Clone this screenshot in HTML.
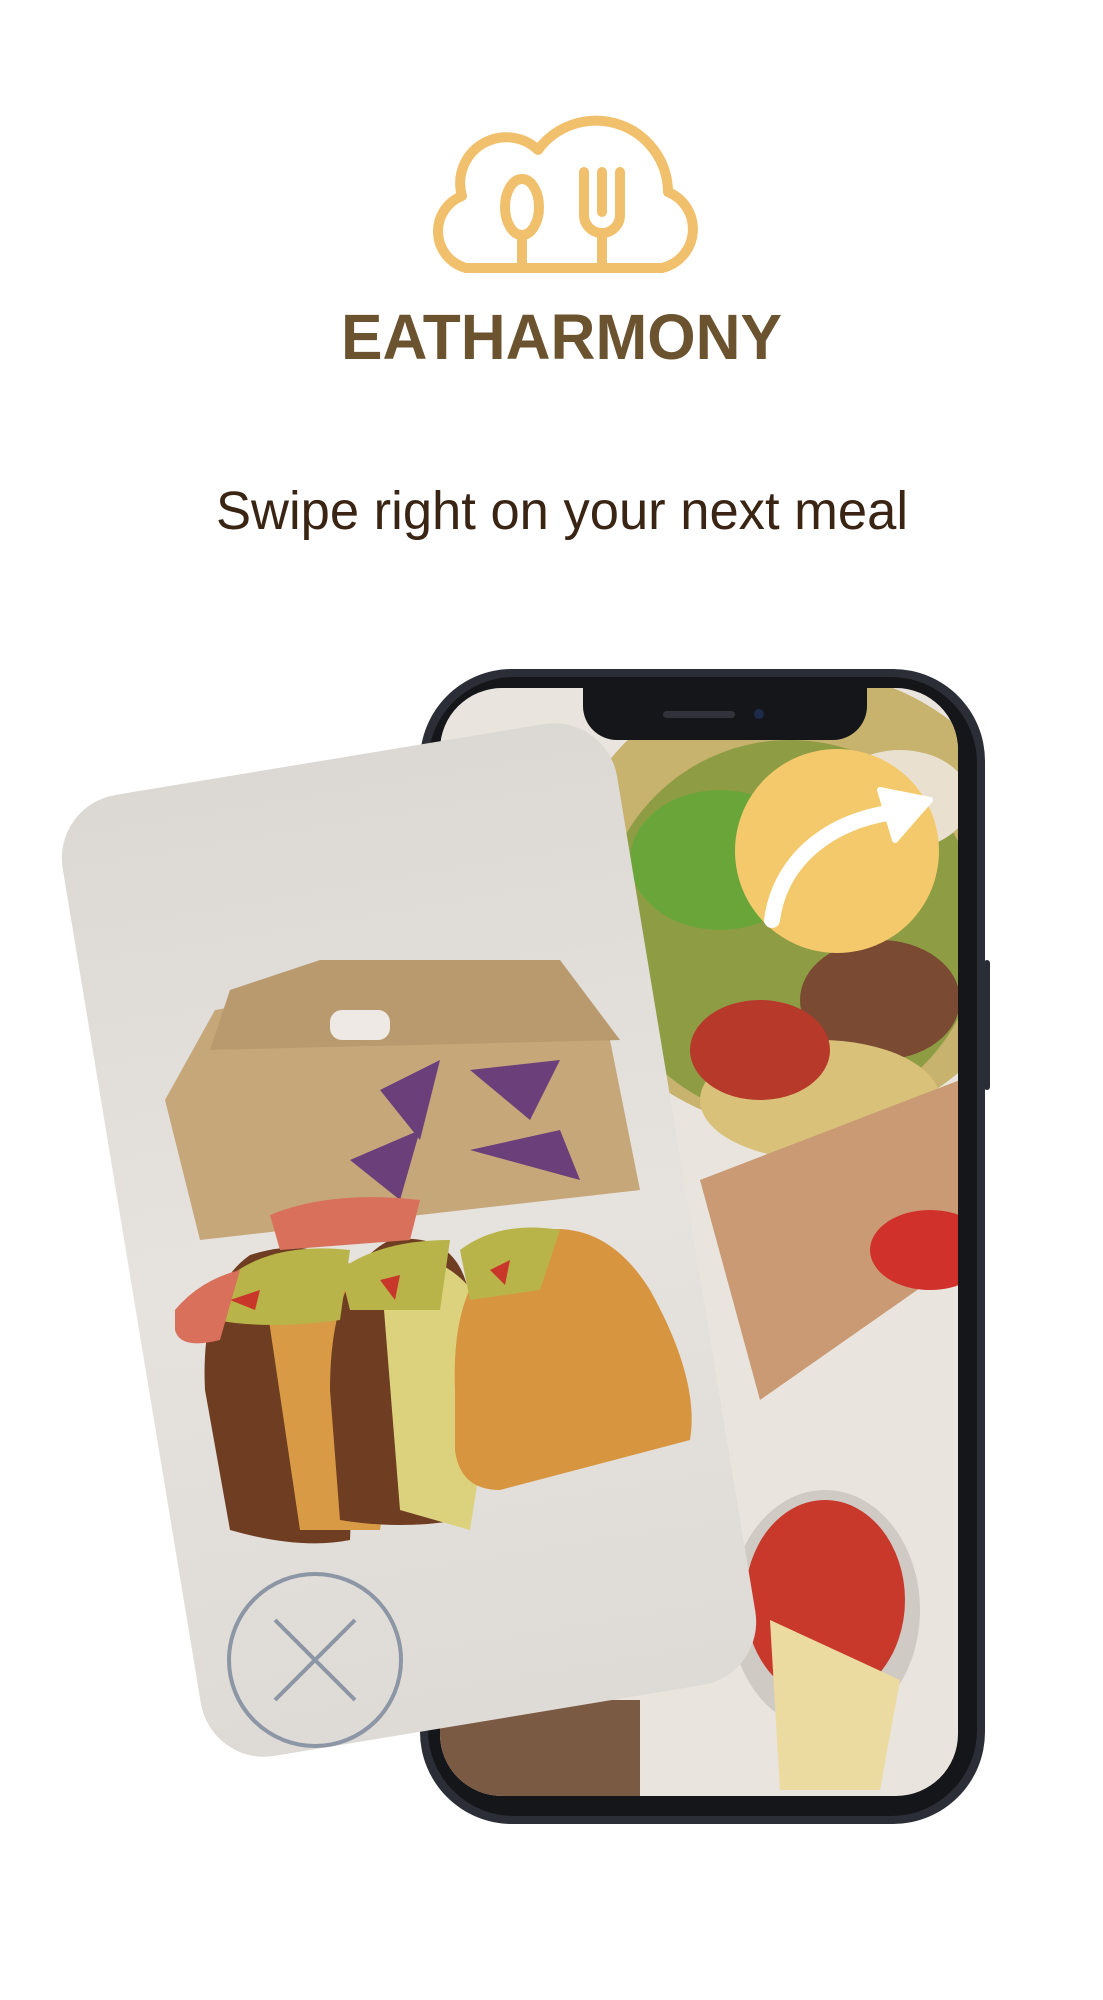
<!DOCTYPE html>
<html><head><meta charset="utf-8"><style>
html,body{margin:0;padding:0;background:#fff;}
svg{display:block;}
</style></head><body>
<svg width="1103" height="2000" viewBox="0 0 1103 2000" xmlns="http://www.w3.org/2000/svg">
<defs>
<clipPath id="scr"><rect x="440" y="688" width="518" height="1108" rx="62"/></clipPath>
<linearGradient id="cardg" x1="0" y1="0" x2="0" y2="1">
<stop offset="0" stop-color="#dcd8d4"/><stop offset="0.5" stop-color="#e6e2de"/><stop offset="1" stop-color="#dedad6"/></linearGradient>
</defs>

<!-- logo cloud -->
<g fill="none" stroke="#f1c06c" stroke-width="10" stroke-linecap="round" stroke-linejoin="round">
<path d="M466 268 A38 38 0 0 1 462 196 A46 46 0 0 1 538 150 A72 72 0 0 1 668 192 A40 40 0 0 1 662 268 Z"/>
<ellipse cx="522" cy="207" rx="17" ry="28"/>
<line x1="522" y1="235" x2="522" y2="268"/>
<path d="M584 172 V215 A18 18 0 0 0 620 215 V172"/>
<line x1="602" y1="172" x2="602" y2="212"/>
<line x1="602" y1="233" x2="602" y2="268"/>
</g>
<text x="341" y="359" font-family="Liberation Sans, sans-serif" font-weight="bold" font-size="64" fill="#6b5330" textLength="441" lengthAdjust="spacingAndGlyphs">EATHARMONY</text>
<text x="216" y="529" font-family="Liberation Sans, sans-serif" font-size="54" fill="#3a2515" textLength="692" lengthAdjust="spacingAndGlyphs">Swipe right on your next meal</text>

<!-- phone -->
<rect x="984" y="960" width="6" height="130" rx="3" fill="#2a2d35"/>
<rect x="420" y="669" width="565" height="1155" rx="92" fill="#2b2e36"/>
<rect x="428" y="677" width="549" height="1139" rx="86" fill="#15161a"/>
<g clip-path="url(#scr)">
<rect x="440" y="688" width="518" height="1108" fill="#e9e4dd"/>
<ellipse cx="800" cy="900" rx="240" ry="230" fill="#c7b36e"/>
<ellipse cx="790" cy="930" rx="190" ry="190" fill="#8e9c44"/>
<ellipse cx="720" cy="860" rx="90" ry="70" fill="#6aa53a"/>
<ellipse cx="880" cy="1000" rx="80" ry="60" fill="#7a4a33"/>
<ellipse cx="820" cy="1100" rx="120" ry="60" fill="#d9c17a"/>
<ellipse cx="760" cy="1050" rx="70" ry="50" fill="#b7392a"/>
<ellipse cx="900" cy="800" rx="70" ry="50" fill="#e9e0d0"/>
<path d="M700 1180 L960 1080 L960 1260 L760 1400 Z" fill="#c99a74"/>
<ellipse cx="930" cy="1250" rx="60" ry="40" fill="#d0322b"/>
<ellipse cx="825" cy="1610" rx="95" ry="120" fill="#cfcac4"/>
<ellipse cx="825" cy="1600" rx="80" ry="100" fill="#c8392c"/>
<path d="M770 1620 L900 1680 L880 1790 L780 1790 Z" fill="#ecdba0"/>
<rect x="440" y="1700" width="200" height="100" fill="#7a5a43"/>
</g>
<path d="M583 688 H867 V706 A34 34 0 0 1 833 740 H617 A34 34 0 0 1 583 706 Z" fill="#15161a"/>
<rect x="663" y="711" width="72" height="7" rx="3.5" fill="#30333a"/>
<circle cx="759" cy="714" r="5" fill="#1d2a4a"/>

<circle cx="837" cy="851" r="102" fill="#f3c96b"/>
<path d="M772 920 C780 860 830 820 895 812" fill="none" stroke="#fff" stroke-width="16" stroke-linecap="round"/>
<path d="M880 790 L930 800 L895 840 Z" fill="#fff" stroke="#fff" stroke-width="6" stroke-linejoin="round"/>

<!-- card -->
<g transform="rotate(-9.4 409 1240)">
<rect x="128" y="753" width="562" height="974" rx="64" fill="url(#cardg)"/>
</g>
<g>
<path d="M165 1100 L215 1010 L330 990 L560 990 L610 1040 L640 1190 L200 1240 Z" fill="#c6a77a"/>
<path d="M230 990 L320 960 L560 960 L620 1040 L210 1050 Z" fill="#b89a6e"/>
<rect x="330" y="1010" width="60" height="30" rx="12" fill="#eee9e4"/>
<path d="M380 1090 L440 1060 L420 1140 Z M470 1070 L560 1060 L530 1120 Z M350 1160 L420 1130 L400 1200 Z M470 1150 L560 1130 L580 1180 Z" fill="#6a3f7a"/>
<path d="M205 1390 Q200 1290 250 1255 Q330 1230 360 1290 L350 1540 Q300 1550 230 1530 Z" fill="#6e3d22"/>
<path d="M260 1260 Q370 1230 410 1340 L380 1530 L300 1530 Z" fill="#d89a45"/>
<path d="M330 1390 Q330 1270 390 1240 Q460 1230 470 1300 L460 1520 Q400 1530 340 1520 Z" fill="#6e3d22"/>
<path d="M380 1260 Q460 1240 500 1340 L470 1530 L400 1510 Z" fill="#dcd27e"/>
<path d="M455 1390 Q450 1270 520 1235 Q600 1210 650 1290 Q700 1380 690 1440 L500 1490 Q460 1490 455 1450 Z" fill="#d8953f"/>
<path d="M215 1290 Q260 1240 350 1250 L340 1320 Q270 1330 215 1320 Z M340 1270 Q380 1240 450 1240 L440 1310 L350 1310 Z M460 1250 Q500 1220 560 1230 L540 1290 L470 1300 Z" fill="#b8b44a"/>
<path d="M230 1300 L260 1290 L255 1310 Z M380 1280 L400 1275 L395 1300 Z M490 1270 L510 1260 L505 1285 Z" fill="#c8372a"/>
<path d="M175 1310 Q200 1280 240 1270 L220 1340 Q180 1350 175 1330 Z M270 1215 Q330 1190 420 1200 L410 1240 L280 1250 Z" fill="#d8705c"/>
</g>
<circle cx="315" cy="1660" r="86" fill="none" stroke="#8c96a5" stroke-width="4"/>
<path d="M275 1620 L355 1700 M355 1620 L275 1700" stroke="#8c96a5" stroke-width="4"/>
</svg>
</body></html>
